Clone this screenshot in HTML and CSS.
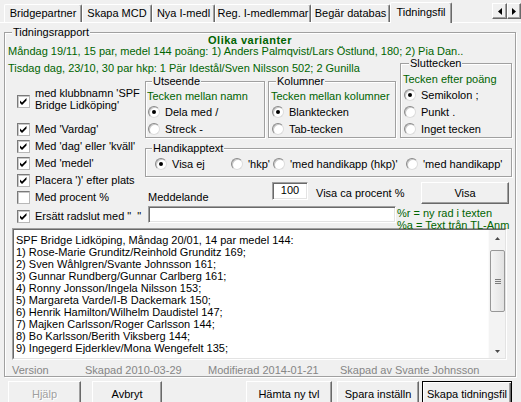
FILE: index.html
```html
<!DOCTYPE html>
<html lang="sv">
<head>
<meta charset="utf-8">
<title>Tidningsfil</title>
<link rel="stylesheet" href="styles.css">
</head>
<body>
<div class="tabbar">
  <div class="tab t1">Bridgepartner</div>
  <div class="tab t2">Skapa MCD</div>
  <div class="tab t3">Nya I-medl</div>
  <div class="tab t4">Reg. I-medlemmar</div>
  <div class="tab t5">Begär databas</div>
  <div class="tab active t6">Tidningsfil</div>
  <div class="tabscroll">
    <span class="sbtn sl"><svg width="4" height="7" viewBox="0 0 4 7"><polygon points="4,0 4,7 0,3.5"/></svg></span>
    <span class="sbtn sr"><svg width="4" height="7" viewBox="0 0 4 7"><polygon points="0,0 0,7 4,3.5"/></svg></span>
  </div>
</div>

<fieldset class="group main">
  <legend>Tidningsrapport</legend>
  <div class="title">Olika varianter</div>
  <div class="sample s1">Måndag 19/11, 15 par, medel 144 poäng: 1) Anders Palmqvist/Lars Östlund, 180; 2) Pia Dan..</div>

  <div class="grid">
    <div class="sample s2">Tisdag dag, 23/10, 30 par hkp: 1 Pär Idestål/Sven Nilsson 502; 2 Gunilla</div>

    <div class="checks">
      <div class="chk two"><span class="cb on"><svg width="11" height="11" viewBox="0 0 11 11"><path d="M2 4.5 L4 6.5 L8.5 2 L8.5 4.5 L4 9 L2 7 Z"/></svg></span><span class="lbl">med klubbnamn 'SPF<br>Bridge Lidköping'</span></div>
      <div class="chk"><span class="cb on"><svg width="11" height="11" viewBox="0 0 11 11"><path d="M2 4.5 L4 6.5 L8.5 2 L8.5 4.5 L4 9 L2 7 Z"/></svg></span><span class="lbl">Med 'Vardag'</span></div>
      <div class="chk"><span class="cb on"><svg width="11" height="11" viewBox="0 0 11 11"><path d="M2 4.5 L4 6.5 L8.5 2 L8.5 4.5 L4 9 L2 7 Z"/></svg></span><span class="lbl">Med 'dag' eller 'kväll'</span></div>
      <div class="chk"><span class="cb on"><svg width="11" height="11" viewBox="0 0 11 11"><path d="M2 4.5 L4 6.5 L8.5 2 L8.5 4.5 L4 9 L2 7 Z"/></svg></span><span class="lbl">Med 'medel'</span></div>
      <div class="chk"><span class="cb on"><svg width="11" height="11" viewBox="0 0 11 11"><path d="M2 4.5 L4 6.5 L8.5 2 L8.5 4.5 L4 9 L2 7 Z"/></svg></span><span class="lbl">Placera ')' efter plats</span></div>
      <div class="chk"><span class="cb"></span><span class="lbl">Med procent %</span></div>
      <div class="chk last"><span class="cb on"><svg width="11" height="11" viewBox="0 0 11 11"><path d="M2 4.5 L4 6.5 L8.5 2 L8.5 4.5 L4 9 L2 7 Z"/></svg></span><span class="lbl">Ersätt radslut med "&nbsp;&nbsp;"</span></div>
    </div>

    <div class="pair">
      <fieldset class="group uts">
        <legend>Utseende</legend>
        <div class="glabel">Tecken mellan namn</div>
        <div class="opt"><span class="radio on"></span>Dela med /</div>
        <div class="opt"><span class="radio"></span>Streck -</div>
      </fieldset>
      <fieldset class="group kol">
        <legend>Kolumner</legend>
        <div class="glabel">Tecken mellan kolumner</div>
        <div class="opt"><span class="radio on"></span>Blanktecken</div>
        <div class="opt"><span class="radio"></span>Tab-tecken</div>
      </fieldset>
    </div>

    <fieldset class="group slut">
      <legend>Sluttecken</legend>
      <div class="glabel">Tecken efter poäng</div>
      <div class="opt"><span class="radio on"></span>Semikolon ;</div>
      <div class="opt"><span class="radio"></span>Punkt .</div>
      <div class="opt"><span class="radio"></span>Inget tecken</div>
    </fieldset>

    <fieldset class="group hkp">
      <legend>Handikapptext</legend>
      <div class="hrow">
        <div class="opt h1"><span class="radio on"></span>Visa ej</div>
        <div class="opt h2"><span class="radio"></span>'hkp'</div>
        <div class="opt h3"><span class="radio"></span>'med handikapp (hkp)'</div>
        <div class="opt h4"><span class="radio"></span>'med handikapp'</div>
      </div>
    </fieldset>

    <div class="msgrow">
      <span class="msglbl">Meddelande</span>
      <span class="num">100</span>
      <span class="pct">Visa ca procent %</span>
      <span class="btn visa">Visa</span>
    </div>

    <div class="inrow">
      <span class="field"></span>
      <div class="notes">%r = ny rad i texten<br>%a = Text trån TL-Anm</div>
    </div>
  </div>

  <div class="memo">
    <div class="memo-in">
      <div class="memo-text">SPF Bridge Lidköping, Måndag 20/01, 14 par medel 144:
1) Rose-Marie Grunditz/Reinhold Grunditz 169;
2) Sven Wåhlgren/Svante Johnsson 161;
3) Gunnar Rundberg/Gunnar Carlberg 161;
4) Ronny Jonsson/Ingela Nilsson 153;
5) Margareta Varde/I-B Dackemark 150;
6) Henrik Hamilton/Wilhelm Daudistel 147;
7) Majken Carlsson/Roger Carlsson 144;
8) Bo Karlsson/Berith Viksberg 144;
9) Ingegerd Ejderklev/Mona Wengefelt 135;</div>
      <div class="vscroll">
        <div class="arrow up"><svg width="5" height="3" viewBox="0 0 5 3"><polygon points="2.5,0 5,3 0,3"/></svg></div>
        <div class="thumb"><span class="grip"></span></div>
        <div class="arrow down"><svg width="5" height="3" viewBox="0 0 5 3"><polygon points="0,0 5,0 2.5,3"/></svg></div>
      </div>
    </div>
  </div>

  <div class="version">
    <span class="v1">Version</span>
    <span class="v2">Skapad 2010-03-29</span>
    <span class="v3">Modifierad 2014-01-21</span>
    <span class="v4">Skapad av Svante Johnsson</span>
  </div>
</fieldset>

<div class="buttons">
  <span class="btn b-help disabled">Hjälp</span>
  <span class="btn b-cancel">Avbryt</span>
  <span class="btn b-fetch">Hämta ny tvl</span>
  <span class="btn b-save">Spara inställn</span>
  <span class="btn b-create default">Skapa tidningsfil</span>
</div>
</body>
</html>
```

FILE: styles.css
```css
* { box-sizing: border-box; }

html, body { margin: 0; padding: 0; }

body {
  width: 521px;
  height: 402px;
  overflow: hidden;
  background: #f0f0f0;
  font-family: "Liberation Sans", Arial, sans-serif;
  font-size: 11px;
  color: #000;
}

/* ---------- tab strip ---------- */
.tabbar {
  display: flex;
  align-items: flex-end;
  height: 23px;
  padding-left: 4px;
  border-bottom: 1px solid #fff;
}

.tab {
  height: 18px;
  border: 1px solid;
  border-color: #fff #696969 transparent #fff;
  border-bottom: 0;
  border-radius: 2px 2px 0 0;
  box-shadow: inset -1px 0 0 #a0a0a0;
  background: #f0f0f0;
  display: flex;
  align-items: center;
  justify-content: center;
  white-space: nowrap;
  padding-bottom: 1px;
}
.t1 { width: 78px; }
.t2 { width: 70px; }
.t3 { width: 63px; }
.t4 { width: 96px; }
.t5 { width: 79px; }
.t6 { width: 62px; }

.tab.active {
  height: 21px;
  margin-bottom: -1px;
  position: relative;
  z-index: 1;
  padding-bottom: 3px;
}

.tabscroll {
  margin-left: auto;
  align-self: flex-start;
  margin-top: 3px;
  display: flex;
}
.sbtn {
  height: 16px;
  border: 1px solid;
  border-color: #fff #696969 #696969 #fff;
  box-shadow: inset -1px -1px 0 #a0a0a0;
  display: flex;
  align-items: center;
  justify-content: center;
}
.sbtn.sl { width: 15px; }
.sbtn.sr { width: 14px; }
.sbtn svg { display: block; fill: #000; }

/* ---------- group boxes ---------- */
.group {
  margin: 0;
  padding: 0;
  min-width: 0;
  border: 1px solid #a0a0a0;
  box-shadow: inset 1px 1px 0 #fff, 1px 1px 0 #fff;
}
.group > legend {
  padding: 0 1px;
  margin-left: 7px;
  line-height: 13px;
  height: 13px;
  background: #f0f0f0;
}

.main {
  margin: 3px 0 0 4px;
  width: 512px;
}

.title {
  margin-top: -4px;
  height: 11px;
  line-height: 11px;
  text-align: center;
  padding-right: 20px;
  font-weight: bold;
  letter-spacing: 0.5px;
  color: #006400;
}

.sample {
  color: #006400;
  white-space: nowrap;
  padding-left: 3px;
}
.s1 {
  height: 11px;
  line-height: 11px;
}
.s2 {
  grid-column: 1 / 3;
  grid-row: 1;
  padding-top: 5px;
  line-height: 13px;
  height: 18px;
}

.grid {
  display: grid;
  grid-template-columns: 140px 255px 112px;
  align-items: start;
}

/* ---------- checkboxes ---------- */
.checks {
  grid-column: 1;
  grid-row: 2 / 6;
  padding: 11.5px 0 0 12px;
}
.chk {
  display: flex;
  align-items: center;
  height: 17px;
  white-space: nowrap;
}
.chk.two {
  height: 24px;
  align-items: flex-start;
  margin-bottom: 10px;
  line-height: 12px;
}
.chk.two .cb { margin-top: 8px; }
.chk.last { margin-top: 2px; }
.lbl { margin-left: 5px; }

.cb {
  width: 13px;
  height: 13px;
  flex: none;
  background: #fff;
  border: 1px solid;
  border-color: #7a7a7a #b8b8b8 #b8b8b8 #7a7a7a;
  box-shadow: inset 1px 1px 0 #c8c8c8;
}
.cb svg { display: block; fill: #000; }

/* ---------- radio groups ---------- */
.pair {
  grid-column: 2;
  grid-row: 2;
  display: flex;
  gap: 3px;
}
.uts { width: 120px; height: 63px; }
.uts > legend { margin-left: 6px; }
.kol { width: 128px; height: 63px; }

.glabel {
  color: #006400;
  height: 13px;
  line-height: 13px;
  white-space: nowrap;
}
.uts .glabel { margin-top: 2px; padding-left: 1px; }
.kol .glabel { margin-top: 2px; padding-left: 2px; }

.opt {
  display: flex;
  align-items: center;
  height: 17px;
  white-space: nowrap;
}
.uts .opt { padding-left: 2px; }
.kol .opt { padding-left: 3px; }
.slut .opt { padding-left: 3px; }

.radio {
  position: relative;
  flex: none;
  width: 12px;
  height: 12px;
  margin-right: 5px;
  border-radius: 50%;
  background: #fff;
  border: 1px solid;
  border-color: #8a8a8a #dcdcdc #dcdcdc #8a8a8a;
  box-shadow: inset 1px 1px 0 #c8c8c8;
}
.radio.on::after {
  content: "";
  position: absolute;
  left: 3px;
  top: 3px;
  width: 4px;
  height: 4px;
  border-radius: 50%;
  background: #000;
}

.slut {
  grid-column: 3;
  grid-row: 1 / 3;
  width: 112px;
  height: 81px;
}
.slut > legend { margin-left: 8px; }
.slut .glabel { margin-top: 3px; padding-left: 2px; }

.hkp {
  grid-column: 2 / 4;
  grid-row: 3;
  margin-top: 4px;
  height: 35px;
}
.hkp > legend { margin-left: 6px; }
.hrow {
  display: flex;
  padding-left: 9px;
}
.h1 { width: 76px; }
.h2 { width: 42px; }
.h3 { width: 133px; }

/* ---------- message rows ---------- */
.msgrow {
  grid-column: 2 / 4;
  grid-row: 4;
  margin-top: 5px;
  height: 22px;
  display: flex;
  align-items: flex-start;
  white-space: nowrap;
}
.msglbl {
  width: 127px;
  padding-left: 3px;
  margin-top: 8.5px;
  line-height: 13px;
}
.num {
  width: 36px;
  height: 18px;
  line-height: 14px;
  text-align: center;
  background: #fff;
  border: 1px solid;
  border-color: #a0a0a0 #fff #fff #a0a0a0;
  box-shadow: inset 1px 1px 0 #696969, inset -1px -1px 0 #e3e3e3;
}
.pct {
  margin-left: 8px;
  margin-top: 4.5px;
  line-height: 13px;
}

.btn {
  display: flex;
  align-items: center;
  justify-content: center;
  white-space: nowrap;
  background: #f0f0f0;
  border: 1px solid;
  border-color: #fff #696969 #696969 #fff;
  box-shadow: inset -1px -1px 0 #a0a0a0;
}
.visa {
  margin-left: auto;
  margin-right: 3px;
  width: 88px;
  height: 22px;
}

.inrow {
  grid-column: 2 / 4;
  grid-row: 5;
  height: 24px;
  display: flex;
  align-items: flex-start;
}
.field {
  margin: 2px 0 0 3px;
  width: 248px;
  height: 17px;
  background: #fff;
  border: 1px solid;
  border-color: #a0a0a0 #fff #fff #a0a0a0;
  box-shadow: inset 1px 1px 0 #696969, inset -1px -1px 0 #e3e3e3;
}
.notes {
  margin: 2.5px 0 0 1px;
  color: #006400;
  line-height: 12px;
  white-space: nowrap;
}

/* ---------- memo ---------- */
.memo {
  margin-left: 7px;
  width: 495px;
  height: 132px;
  border: 1px solid;
  border-color: #a0a0a0 #fff #fff #a0a0a0;
}
.memo-in {
  height: 100%;
  display: flex;
  border: 1px solid;
  border-color: #696969 #e3e3e3 #e3e3e3 #696969;
}
.memo-text {
  flex: 1;
  background: #fff;
  padding: 4px 2px;
  line-height: 12px;
  white-space: pre;
  overflow: hidden;
}
.vscroll {
  width: 17px;
  display: flex;
  flex-direction: column;
  background: #f3f3f3;
  border-left: 1px solid #fbfbfb;
}
.arrow {
  height: 17px;
  display: flex;
  justify-content: center;
  align-items: center;
}
.arrow svg { display: block; fill: #4a4a4a; }
.arrow.down { margin-top: auto; height: 14px; align-items: flex-start; padding-top: 6px; }
.thumb {
  margin: 3px 0 0 1px;
  width: 15px;
  height: 62px;
  border: 1px solid #979797;
  border-radius: 2px;
  background: linear-gradient(to right, #f4f4f4, #e2e2e2);
  display: flex;
  align-items: center;
  justify-content: center;
}
.grip {
  width: 6px;
  height: 5px;
  background: repeating-linear-gradient(to bottom, #7c7c7c 0 1px, transparent 1px 2px);
}

/* ---------- version line ---------- */
.version {
  display: flex;
  margin-top: 4px;
  padding-left: 7px;
  height: 12px;
  line-height: 12px;
  color: #868686;
  white-space: nowrap;
}
.v1 { width: 73px; }
.v2 { width: 123px; }
.v3 { width: 132px; }

/* ---------- bottom buttons ---------- */
.buttons {
  display: flex;
  margin-top: 4px;
  padding-left: 8px;
}
.buttons .btn { height: 25px; }
.b-help { width: 73px; }
.b-cancel { width: 70px; margin-left: 11px; }
.b-fetch { width: 86px; margin-left: 84px; }
.b-save { width: 82px; margin-left: 5px; }
.b-create { width: 90px; margin-left: 3px; }

.btn.disabled {
  color: #a0a0a0;
  text-shadow: 1px 1px 0 #fff;
}
.btn.default {
  border-color: #000;
  box-shadow: inset 1px 1px 0 #fff, inset -1px -1px 0 #696969, inset -2px -2px 0 #a0a0a0;
}
```
